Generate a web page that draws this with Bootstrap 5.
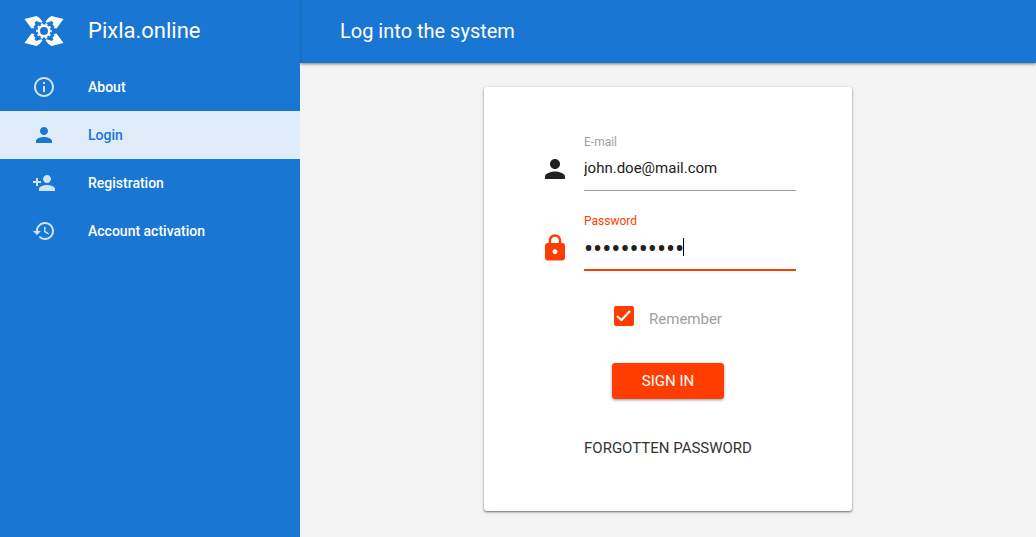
<!DOCTYPE html>
<html lang="en">
<head>
<meta charset="utf-8">
<meta name="viewport" content="width=device-width, initial-scale=1">
<title>Log into the system - Pixla.online</title>
<link href="https://cdn.jsdelivr.net/npm/bootstrap@5.3.0/dist/css/bootstrap.min.css" rel="stylesheet">
<style>
  :root { --px-blue: #1976d2; --px-red: #ff3d00; --px-ink: #212121; }
  body { font-family: Roboto, "Liberation Sans", sans-serif; font-size: 15px; background: #f4f4f4; color: var(--px-ink); }
  .side { width: 300px; background: var(--px-blue); }
  .bar { height: 63px; }
  .brand-text { font-size: 22px; line-height: 28px; }
  .brand-row { padding: 0 24px 1px; gap: 24px; }
  .side .nav-link { height: 48px; padding: 0 32px; gap: 32px; color: #fff; font-size: 14px; font-weight: 500; }
  .side .nav-link svg { opacity: .8; }
  .side .nav-link.active { background: #dfecf9; color: var(--px-blue); }
  .side .nav-link.active svg { opacity: 1; }
  .side svg, .field svg { fill: currentColor; flex: none; }
  .topbar { background: var(--px-blue); padding: 0 40px 2px; box-shadow: 0 1px 3px rgba(0,0,0,.5), inset 2px 0 2px -1px rgba(0,0,0,.15); clip-path: inset(0 0 -6px 0); }
  .topbar h1 { font-size: 20px; line-height: 28px; font-weight: 400; }
  .login { width: 368px; min-height: 424px; padding: 48px 56px 50px; border-radius: 3px; box-shadow: 0 1px 2px rgba(0,0,0,.5), 0 1px 5px rgba(0,0,0,.1); }
  .field { gap: 14px; height: 79px; }
  .field svg { margin-top: 19px; }
  .field label { font-size: 12px; line-height: 14px; color: #9e9e9e; }
  .field .form-control { height: 42px; padding: 0 0 4px; border: 0; border-bottom: 1px solid #9e9e9e; border-radius: 0; font-size: 15px; color: var(--px-ink); background: none; box-shadow: none; }
  .field.current svg, .field.current label { color: var(--px-red); }
  .field.current .form-control { height: 43px; padding: 0; border-bottom: 2px solid var(--px-red); font-size: 27px; line-height: 32px; }
  .caret { left: 99px; top: 24px; width: 1px; height: 18px; background: #000; }
  .remember { gap: 15px; margin: 13px 0 0; padding-left: 0; }
  .remember .form-check-input { width: 20px; height: 20px; margin: 0; border-radius: 2px; box-shadow: none; }
  .remember .form-check-input:checked { background-color: var(--px-red); border-color: var(--px-red); background-size: 20px; background-image: url("data:image/svg+xml,%3Csvg xmlns='http://www.w3.org/2000/svg' viewBox='0 0 20 20'%3E%3Cpath fill='none' stroke='%23fff' stroke-width='2' d='M3 10l4.500 4L16 5'/%3E%3C/svg%3E"); }
  .remember label { color: #9e9e9e; line-height: 20px; padding-top: 3px; }
  .btn-sign { --bs-btn-color: #fff; --bs-btn-bg: var(--px-red); --bs-btn-border-color: var(--px-red); --bs-btn-hover-color: #fff; --bs-btn-hover-bg: #f03a00; --bs-btn-hover-border-color: #f03a00; width: 112px; height: 36px; padding: 0; margin-top: 33px; border-radius: 3px; font-size: 15px; box-shadow: 0 1px 3px rgba(0,0,0,.4); }
  .forgot { margin-top: 38px; line-height: 22px; color: #333; }
</style>
</head>
<body>
<div class="d-flex min-vh-100">
  <aside class="side flex-shrink-0 text-white">
    <a href="#" class="bar brand-row d-flex align-items-center text-white text-decoration-none">
      <svg width="40" height="32" viewBox="0 0 40 32" aria-hidden="true">
        <defs><g id="arm"><path d="M.5 4 12.500 1 15.500 3 18.500 6.500 17.500 7.700 15 7 12.500 6 10.500 7.500 11.500 9.500 9.500 11.500 10.500 13 7.500 13.500Z"/></g></defs>
        <use href="#arm"/>
        <use href="#arm" transform="matrix(-1 0 0 1 40 0)"/>
        <use href="#arm" transform="matrix(1 0 0 -1 0 32)"/>
        <use href="#arm" transform="matrix(-1 0 0 -1 40 32)"/>
        <circle cx="20" cy="16" r="5.200" fill="none" stroke="#fff" stroke-width="2.400"/>
        <circle cx="20" cy="16" r="7" fill="none" stroke="#fff" stroke-width="1.600" stroke-dasharray="2.300 2.098" stroke-dashoffset="1.150"/>
      </svg>
      <span class="brand-text">Pixla.online</span>
    </a>
    <nav class="nav flex-column">
      <a class="nav-link d-flex align-items-center" href="#">
        <svg width="24" height="24" viewBox="0 0 24 24" aria-hidden="true"><path d="M11 17h2v-6h-2v6zm1-15C6.480 2 2 6.480 2 12s4.480 10 10 10 10-4.480 10-10S17.520 2 12 2zm0 18c-4.410 0-8-3.590-8-8s3.590-8 8-8 8 3.590 8 8-3.590 8-8 8zM11 9h2V7h-2v2z"/></svg>
        About
      </a>
      <a class="nav-link active d-flex align-items-center" aria-current="page" href="#">
        <svg width="24" height="24" viewBox="0 0 24 24" aria-hidden="true"><path d="M12 12c2.210 0 4-1.790 4-4s-1.790-4-4-4-4 1.790-4 4 1.790 4 4 4zm0 2c-2.670 0-8 1.340-8 4v2h16v-2c0-2.660-5.330-4-8-4z"/></svg>
        Login
      </a>
      <a class="nav-link d-flex align-items-center" href="#">
        <svg width="24" height="24" viewBox="0 0 24 24" aria-hidden="true"><path d="M15 12c2.210 0 4-1.790 4-4s-1.790-4-4-4-4 1.790-4 4 1.790 4 4 4zm-9-2V7H4v3H1v2h3v3h2v-3h3v-2H6zm9 4c-2.670 0-8 1.340-8 4v2h16v-2c0-2.660-5.330-4-8-4z"/></svg>
        Registration
      </a>
      <a class="nav-link d-flex align-items-center" href="#">
        <svg width="24" height="24" viewBox="0 0 24 24" aria-hidden="true"><path d="M13 3c-4.970 0-9 4.030-9 9H1l3.890 3.890.07.14L9 12H6c0-3.870 3.130-7 7-7s7 3.130 7 7-3.130 7-7 7c-1.930 0-3.680-.79-4.940-2.060l-1.420 1.420C8.270 19.990 10.510 21 13 21c4.970 0 9-4.030 9-9s-4.030-9-9-9zm-1 5v5l4.280 2.540.72-1.210-3.500-2.080V8H12z"/></svg>
        Account activation
      </a>
    </nav>
  </aside>
  <div class="flex-grow-1">
    <header class="topbar bar d-flex align-items-center text-white">
      <h1 class="m-0">Log into the system</h1>
    </header>
    <main class="d-flex justify-content-center p-4">
      <form class="login bg-white d-flex flex-column">
        <div class="field d-flex">
          <svg width="30" height="30" viewBox="0 0 24 24" aria-hidden="true"><path d="M12 12c2.210 0 4-1.790 4-4s-1.790-4-4-4-4 1.790-4 4 1.790 4 4 4zm0 2c-2.670 0-8 1.340-8 4v2h16v-2c0-2.660-5.330-4-8-4z"/></svg>
          <div class="flex-grow-1">
            <label class="d-block" for="email">E-mail</label>
            <input class="form-control" id="email" type="email" value="john.doe@mail.com">
          </div>
        </div>
        <div class="field current d-flex">
          <svg width="30" height="30" viewBox="0 0 24 24" aria-hidden="true"><path d="M18 8h-1V6c0-2.760-2.240-5-5-5S7 3.240 7 6v2H6c-1.100 0-2 .9-2 2v10c0 1.100.9 2 2 2h12c1.100 0 2-.9 2-2V10c0-1.100-.9-2-2-2zm-6 9c-1.100 0-2-.9-2-2s.9-2 2-2 2 .9 2 2-.9 2-2 2zm3.100-9H8.900V6c0-1.710 1.390-3.100 3.100-3.100 1.710 0 3.100 1.390 3.100 3.100v2z"/></svg>
          <div class="flex-grow-1 position-relative">
            <label class="d-block" for="password">Password</label>
            <input class="form-control" id="password" type="password" value="johndoe1234">
            <span class="caret position-absolute" aria-hidden="true"></span>
          </div>
        </div>
        <div class="remember form-check d-flex align-self-center">
          <input class="form-check-input float-none" type="checkbox" id="remember" checked>
          <label class="form-check-label" for="remember">Remember</label>
        </div>
        <button type="submit" class="btn btn-sign align-self-center">SIGN IN</button>
        <a href="#" class="forgot align-self-center text-decoration-none">FORGOTTEN PASSWORD</a>
      </form>
    </main>
  </div>
</div>
<script src="https://cdn.jsdelivr.net/npm/bootstrap@5.3.0/dist/js/bootstrap.bundle.min.js"></script>
</body>
</html>
